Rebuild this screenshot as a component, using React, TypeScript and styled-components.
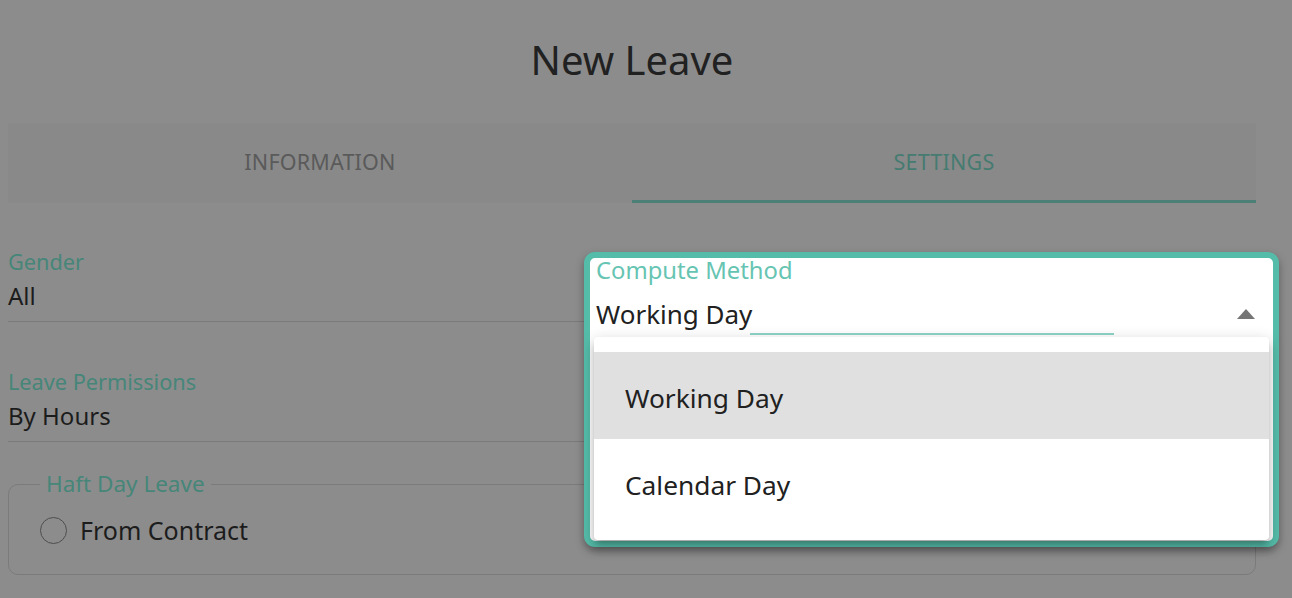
import styled, { createGlobalStyle } from 'styled-components';

const GlobalStyle = createGlobalStyle`
  html, body {
    margin: 0;
    background: #8c8c8c;
    font-family: 'Noto Sans', 'Open Sans', sans-serif;
    overflow: hidden;
  }
`;

const options = ['Working Day', 'Calendar Day'];

const App = () => {
  return (
    <>
      <GlobalStyle />
      <Page>
        <Title>New Leave</Title>
        <Tabs>
          <Tab>Information</Tab>
          <Tab active>Settings</Tab>
        </Tabs>

        <FormGrid>
          <Column>
            <Field>
              <Label>Gender</Label>
              <Value>All</Value>
            </Field>
            <Field>
              <Label>Leave Permissions</Label>
              <Value>By Hours</Value>
            </Field>
          </Column>
          {/* covered by the spotlight below */}
          <Column covered>
            <Field>
              <Label>Compute Method</Label>
              <Value>Working Day</Value>
            </Field>
          </Column>
        </FormGrid>

        <Group>
          <Legend>Haft Day Leave</Legend>
          <RadioRow>
            <Radio />
            <RadioText>From Contract</RadioText>
          </RadioRow>
        </Group>

        {/* tour highlight over the dimmed page */}
        <Spotlight>
          <SelectLabel>Compute Method</SelectLabel>
          <SelectRow>
            <SelectValue>Working Day</SelectValue>
            <Arrow />
          </SelectRow>
          <FocusLine />
          <Menu>
            {options.map((o, i) => (
              <MenuItem key={o} selected={i === 0}>
                {o}
              </MenuItem>
            ))}
          </Menu>
        </Spotlight>
      </Page>
    </>
  );
};

const Page = styled.div`
  position: relative;
  display: flow-root;
  width: 1248px;
  margin: 0 8px;
  height: 598px;
`;

const Title = styled.h1`
  margin: 36px 0 0;
  text-align: center;
  font-size: 40px;
  line-height: 48px;
  font-weight: 400;
  color: #212121;
`;

const Tabs = styled.div`
  display: grid;
  grid-template-columns: 1fr 1fr;
  margin-top: 39px;
  height: 80px;
  background: #898989;
`;

const Tab = styled.div<{ active?: boolean }>`
  display: flex;
  align-items: center;
  justify-content: center;
  font-size: 21.5px;
  letter-spacing: 0.2px;
  text-transform: uppercase;
  color: ${({ active }) => (active ? '#467b71' : '#5a5a5a')};
  border-bottom: 3px solid ${({ active }) => (active ? '#4c7f76' : 'transparent')};
`;

const FormGrid = styled.div`
  display: grid;
  grid-template-columns: 1fr 1fr;
  column-gap: 24px;
  margin-top: 45px;
`;

const Column = styled.div<{ covered?: boolean }>`
  display: flex;
  flex-direction: column;
  gap: 46px;
  visibility: ${({ covered }) => (covered ? 'hidden' : 'visible')};
`;

const Field = styled.div`
  display: flex;
  flex-direction: column;
  gap: 4px;
  padding-bottom: 9px;
  border-bottom: 1px solid #7a7a7a;
`;

const Label = styled.div`
  font-size: 21.7px;
  line-height: 28px;
  color: #468679;
`;

const Value = styled.div`
  font-size: 24px;
  line-height: 32px;
  color: #1c1c1c;
`;

const Group = styled.fieldset`
  margin: 28px 0 0;
  padding: 16px 0 28px 31px;
  border: 1px solid #7b7b7b;
  border-radius: 10px;
`;

const Legend = styled.legend`
  padding: 0 6px;
  font-size: 22.5px;
  line-height: 28px;
  color: #468679;
`;

const RadioRow = styled.div`
  display: flex;
  align-items: center;
  gap: 13px;
  height: 32px;
`;

const Radio = styled.span`
  width: 25px;
  height: 25px;
  border: 1.5px solid #4e4e4e;
  border-radius: 50%;
`;

const RadioText = styled.span`
  font-size: 25px;
  color: #1c1c1c;
`;

const Spotlight = styled.div`
  position: absolute;
  left: 576px;
  top: 252px;
  width: 683px;
  height: 283px;
  border: 6px solid #55bca9;
  border-radius: 11px;
  background: #fff;
  box-shadow: 0 4px 8px rgba(0, 0, 0, 0.35);
`;

const SelectLabel = styled.div`
  padding: 0 6px;
  font-size: 23.8px;
  line-height: 24px;
  color: #66c4b2;
`;

const SelectRow = styled.div`
  display: flex;
  align-items: center;
  justify-content: space-between;
  margin-top: 16px;
  padding: 0 18px 0 6px;
`;

const SelectValue = styled.div`
  font-size: 26px;
  line-height: 32px;
  color: #212121;
`;

const Arrow = styled.span`
  width: 0;
  height: 0;
  border-left: 9px solid transparent;
  border-right: 9px solid transparent;
  border-bottom: 10px solid #757575;
`;

const FocusLine = styled.div`
  width: 364px;
  height: 2px;
  margin: 3px 0 0 160px;
  background: #8fd3c5;
`;

const Menu = styled.ul`
  position: absolute;
  left: 4px;
  top: 79px;
  width: 675px;
  height: 203px;
  margin: 0;
  padding: 15px 0 0;
  list-style: none;
  background: #fff;
  border-radius: 4px;
  box-shadow: 0 5px 5px -3px rgba(0, 0, 0, 0.2), 0 8px 10px 1px rgba(0, 0, 0, 0.14),
    0 3px 14px 2px rgba(0, 0, 0, 0.12);
  box-sizing: border-box;
`;

const MenuItem = styled.li<{ selected?: boolean }>`
  display: flex;
  align-items: center;
  height: 87px;
  padding: 4px 0 0 31px;
  box-sizing: border-box;
  font-size: 26.3px;
  color: #212121;
  background: ${({ selected }) => (selected ? '#e0e0e0' : 'transparent')};
`;

export default App;
